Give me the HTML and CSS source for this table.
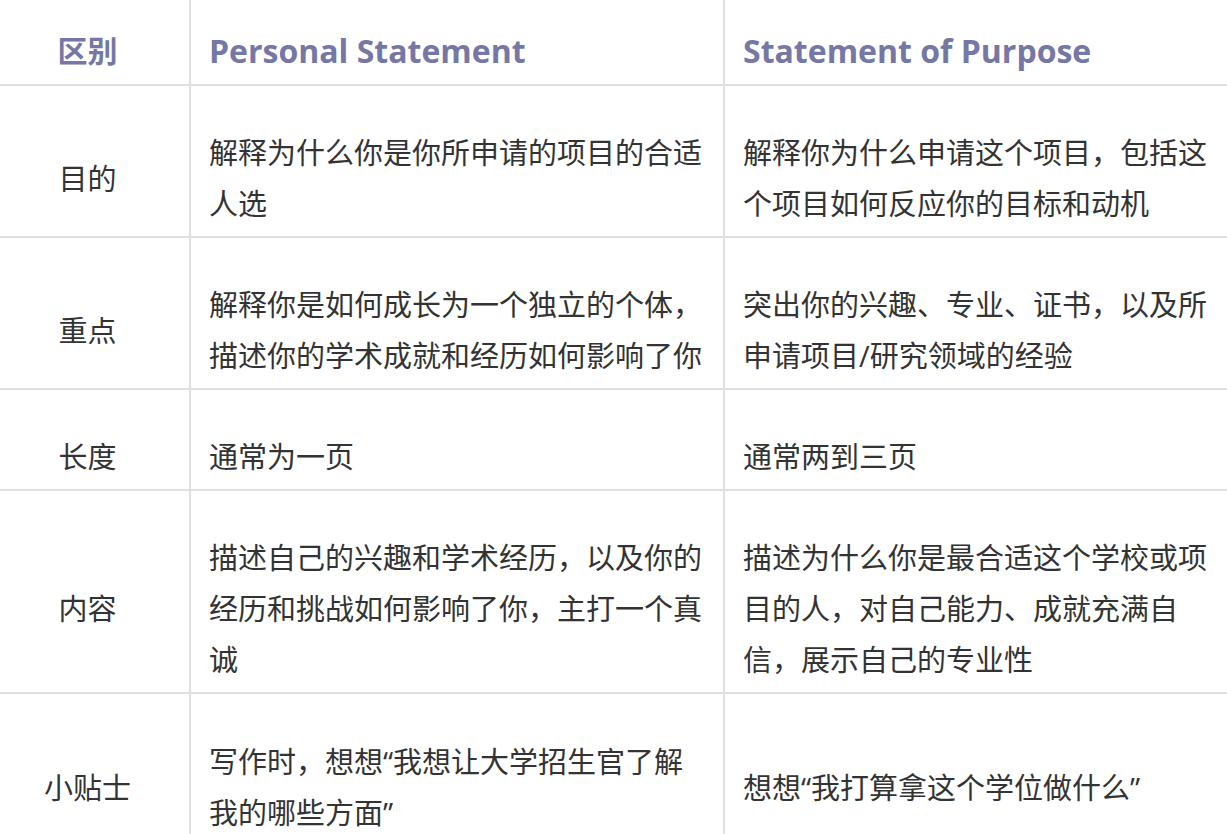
FILE: index.html
```html
<!DOCTYPE html>
<html lang="zh-CN">
<head>
    <meta charset="UTF-8">
    <meta name="viewport" content="width=device-width, initial-scale=1.0">
    <title>PS vs SOP</title>
    <link rel="stylesheet" href="styles.css">
</head>
<body>
    <table class="compare">
        <colgroup>
            <col class="col-label">
            <col class="col-ps">
            <col class="col-sop">
        </colgroup>
        <thead>
            <tr>
                <th class="label">区别</th>
                <th>Personal Statement</th>
                <th>Statement of Purpose</th>
            </tr>
        </thead>
        <tbody>
            <tr>
                <td class="label">目的</td>
                <td>解释为什么你是你所申请的项目的合适人选</td>
                <td>解释你为什么申请这个项目，包括这个项目如何反应你的目标和动机</td>
            </tr>
            <tr>
                <td class="label">重点</td>
                <td>解释你是如何成长为一个独立的个体，描述你的学术成就和经历如何影响了你</td>
                <td>突出你的兴趣、专业、证书，以及所申请项目/研究领域的经验</td>
            </tr>
            <tr>
                <td class="label">长度</td>
                <td>通常为一页</td>
                <td>通常两到三页</td>
            </tr>
            <tr>
                <td class="label">内容</td>
                <td>描述自己的兴趣和学术经历，以及你的经历和挑战如何影响了你，主打一个真诚</td>
                <td>描述为什么你是最合适这个学校或项目的人，对自己能力、成就充满自信，展示自己的专业性</td>
            </tr>
            <tr class="tips">
                <td class="label">小贴士</td>
                <td>写作时，想想“我想让大学招生官了解我的哪些方面”</td>
                <td>想想“我打算拿这个学位做什么”</td>
            </tr>
        </tbody>
    </table>
</body>
</html>
```

FILE: styles.css
```css
body {
    margin: 0;
    padding: 0;
    background: #fff;
    overflow: hidden;
    font-family: "Open Sans", "Noto Sans CJK SC", sans-serif;
    color: #333;
}
.compare {
    width: 1240px;
    table-layout: fixed;
    border-collapse: collapse;
    border-style: hidden;
}
.col-label {
    width: 190px;
}
.col-ps {
    width: 534px;
}
.compare th, .compare td {
    border: 2px solid #e0e0e0;
    font-size: 29px;
    line-height: 51px;
    text-align: left;
    vertical-align: middle;
    padding: 41px 16px 7px 18px;
}
.compare th {
    color: #7577a5;
    font-weight: 700;
    font-size: 32px;
    padding-top: 25px;
    padding-bottom: 8px;
}
.compare th.label {
    font-size: 30px;
}
.compare .label {
    text-align: center;
    padding-left: 0;
    padding-right: 14px;
}
.tips td {
    padding-top: 42px;
    padding-bottom: 42px;
}
```
